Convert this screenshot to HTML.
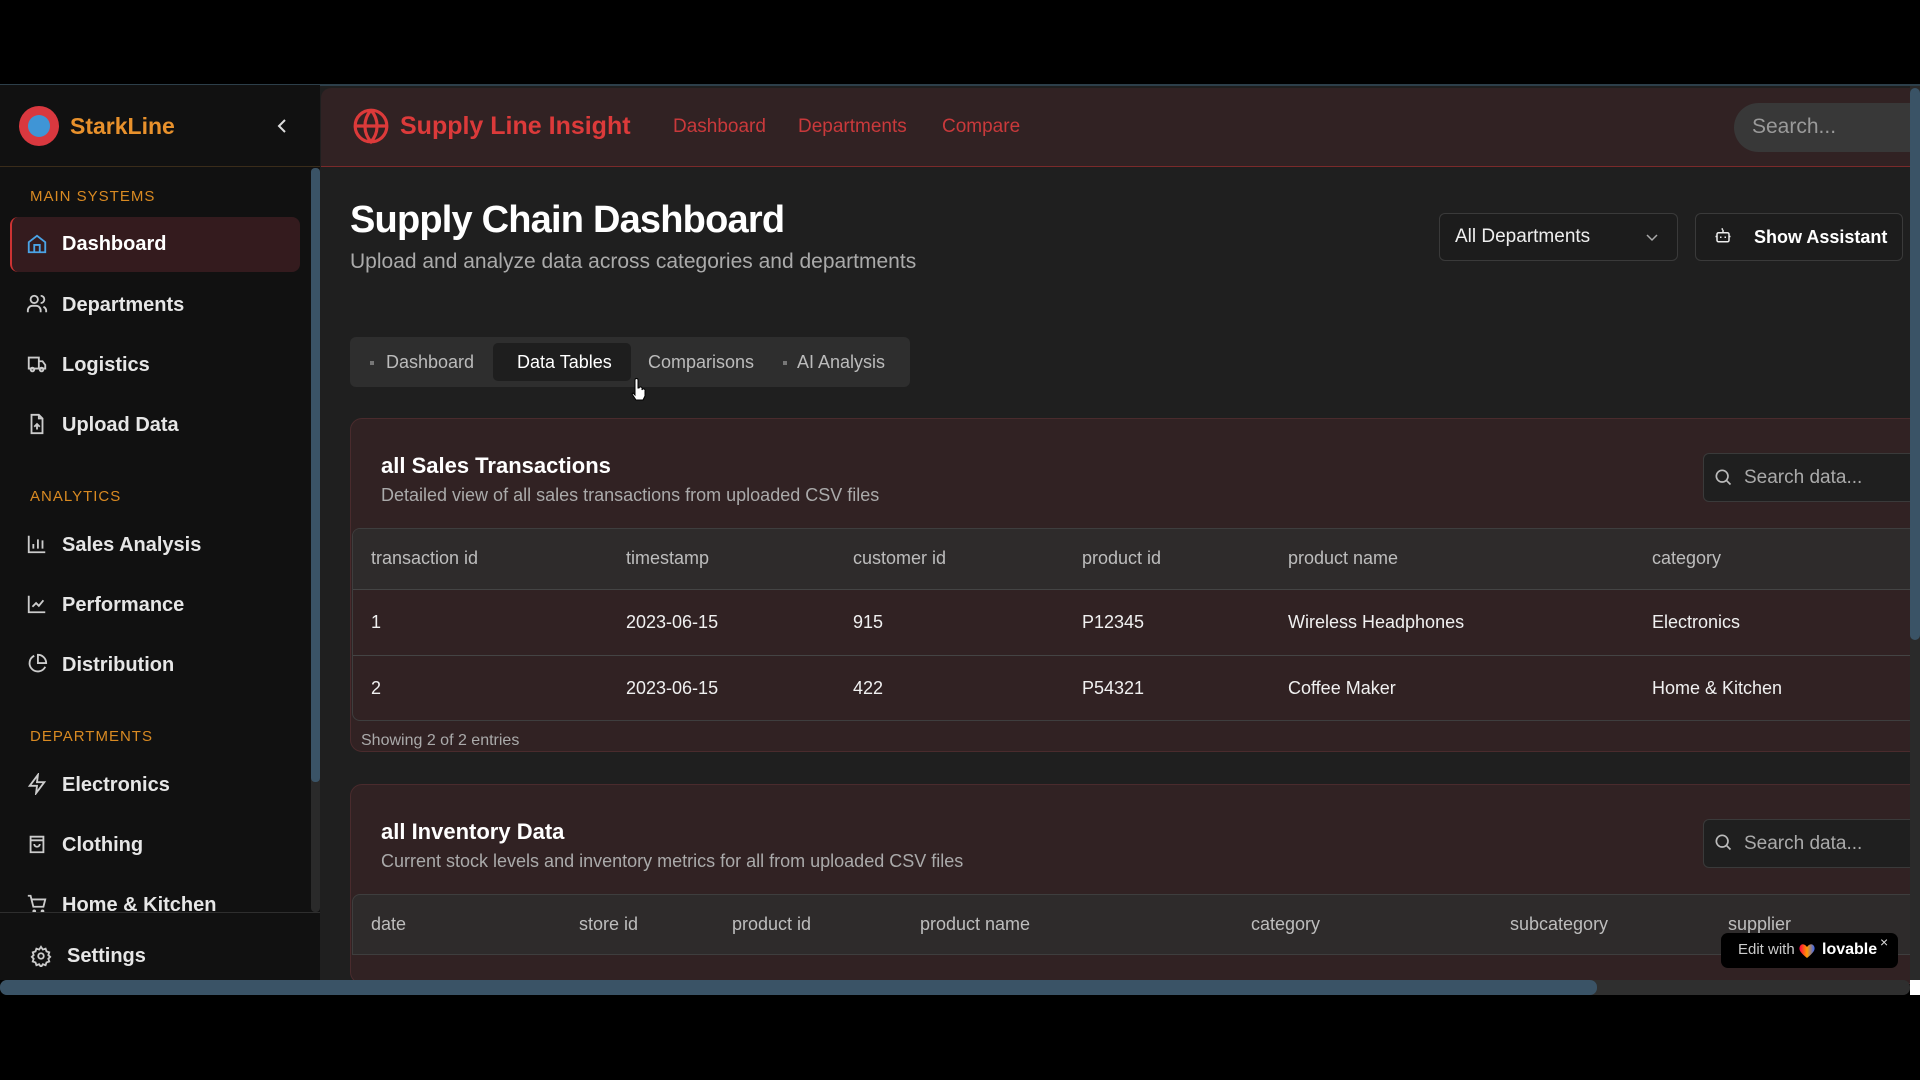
<!DOCTYPE html>
<html><head><meta charset="utf-8"><style>
*{box-sizing:border-box;margin:0;padding:0}
body{width:1920px;height:1080px;background:#000;font-family:"Liberation Sans",sans-serif;position:relative;overflow:hidden;color:#eee}
.a{position:absolute;white-space:nowrap}
.side{left:0;top:85px;width:320px;height:895px;background:#111}
.sec{font-size:15px;color:#d98a22;letter-spacing:1px;left:30px}
.it{left:62px;font-size:20px;color:#e6e6e6;font-weight:bold;line-height:24px}
.ic{left:26px;width:22px;height:22px}
.th{font-size:18px;color:#bdbdbd}
.td{font-size:18px;color:#f0f0f0}
</style></head><body>
<div class="a" style="left:0;top:84px;width:1920px;height:2px;background:#2d3f4a"></div>
<div class="a side"></div>
<div class="a" style="left:0;top:166px;width:320px;height:1px;background:#3a2c1a"></div>
<div class="a" style="left:19px;top:106px;width:40px;height:40px;border-radius:50%;background:#d9383f"></div>
<div class="a" style="left:28px;top:115px;width:22px;height:22px;border-radius:50%;background:#3f95d6"></div>
<div class="a" style="left:70px;top:113px;font-size:23px;font-weight:bold;color:#e8912c">StarkLine</div>
<svg class="a" style="left:274px;top:117px" width="16" height="18" viewBox="0 0 16 18"><path d="M11 3 L5 9 L11 15" stroke="#ddd" stroke-width="2" fill="none"/></svg>
<div class="a" style="left:311px;top:168px;width:9px;height:744px;background:#2a2a2a;border-radius:4px"></div>
<div class="a" style="left:311px;top:168px;width:9px;height:614px;background:#3a5366;border-radius:4px"></div>
<div class="a sec" style="top:188px">MAIN SYSTEMS</div>
<div class="a" style="left:10px;top:217px;width:290px;height:55px;background:#341b1e;border-radius:8px;border-left:2px solid #c33"></div>
<svg class="a ic" style="top:233px" viewBox="0 0 24 24" fill="none" stroke="#4aa3e6" stroke-width="2"><path d="M3 10 L12 3 L21 10 V21 H3 Z M9 21 V13 H15 V21"/></svg>
<div class="a it" style="top:232px;color:#fff">Dashboard</div>
<svg class="a ic" style="top:293px" viewBox="0 0 24 24" fill="none" stroke="#ccc" stroke-width="2"><circle cx="9" cy="7" r="4"/><path d="M2 21v-2a5 5 0 0 1 5-5h4a5 5 0 0 1 5 5v2M16 3a4 4 0 0 1 0 8M22 21v-2a5 5 0 0 0-3-4"/></svg>
<div class="a it" style="top:293px">Departments</div>
<svg class="a ic" style="top:353px" viewBox="0 0 24 24" fill="none" stroke="#ccc" stroke-width="2"><path d="M3 5h11v12H3zM14 9h4l3 4v4h-7"/><circle cx="7" cy="18" r="2"/><circle cx="17" cy="18" r="2"/></svg>
<div class="a it" style="top:353px">Logistics</div>
<svg class="a ic" style="top:413px" viewBox="0 0 24 24" fill="none" stroke="#ccc" stroke-width="2"><path d="M14 2H6v20h12V6zM14 2v4h4M12 18v-6M9 15l3-3 3 3"/></svg>
<div class="a it" style="top:413px">Upload Data</div>
<div class="a sec" style="top:488px">ANALYTICS</div>
<svg class="a ic" style="top:533px" viewBox="0 0 24 24" fill="none" stroke="#ccc" stroke-width="2"><path d="M3 3v18h18M8 17v-5M13 17V7M18 17v-9"/></svg>
<div class="a it" style="top:533px">Sales Analysis</div>
<svg class="a ic" style="top:593px" viewBox="0 0 24 24" fill="none" stroke="#ccc" stroke-width="2"><path d="M3 3v18h18M7 15l4-4 3 3 5-6"/></svg>
<div class="a it" style="top:593px">Performance</div>
<svg class="a ic" style="top:653px" viewBox="0 0 24 24" fill="none" stroke="#ccc" stroke-width="2"><path d="M21 15A9 9 0 1 1 9 3M13 2a9 9 0 0 1 9 9h-9z"/></svg>
<div class="a it" style="top:653px">Distribution</div>
<div class="a sec" style="top:728px">DEPARTMENTS</div>
<svg class="a ic" style="top:773px" viewBox="0 0 24 24" fill="none" stroke="#ccc" stroke-width="2"><path d="M13 2 L4 14 H12 L11 22 L20 10 H12 Z"/></svg>
<div class="a it" style="top:773px">Electronics</div>
<svg class="a ic" style="top:833px" viewBox="0 0 24 24" fill="none" stroke="#ccc" stroke-width="2"><path d="M5 4h14v17H5zM5 8h14M9 12a3 3 0 0 0 6 0"/></svg>
<div class="a it" style="top:833px">Clothing</div>
<div class="a" style="left:0;top:880px;width:311px;height:32px;overflow:hidden">
<svg class="a ic" style="top:13px" viewBox="0 0 24 24" fill="none" stroke="#ccc" stroke-width="2"><path d="M2 3h3l3 12h11l2-8H6"/><circle cx="9" cy="20" r="1"/><circle cx="18" cy="20" r="1"/></svg>
<div class="a it" style="top:13px">Home &amp; Kitchen</div></div>
<div class="a" style="left:0;top:912px;width:320px;height:1px;background:#2e2e2e"></div>
<svg class="a" style="left:30px;top:945px" width="22" height="22" viewBox="0 0 24 24" fill="none" stroke="#ccc" stroke-width="2"><circle cx="12" cy="12" r="3"/><path d="M12 2l2 3 3-1 1 3 3 1-1 3 2 2-2 2 1 3-3 1-1 3-3-1-2 3-2-3-3 1-1-3-3-1 1-3-2-2 2-2-1-3 3-1 1-3 3 1z"/></svg>
<div class="a it" style="left:67px;top:944px">Settings</div>

<div class="a" style="left:320px;top:86px;width:1600px;height:894px;background:#1f1f1f"></div>
<div class="a" style="left:321px;top:88px;width:1599px;height:79px;background:#312223;border-bottom:1px solid #7a2a2a;border-radius:10px 0 0 0"></div>
<svg class="a" style="left:352px;top:107px" width="38" height="38" viewBox="0 0 24 24" fill="none" stroke="#dc3a3a" stroke-width="2"><circle cx="12" cy="12" r="10"/><path d="M2 12h20M12 2a15 15 0 0 1 0 20a15 15 0 0 1 0-20"/></svg>
<div class="a" style="left:400px;top:112px;font-size:25px;font-weight:bold;color:#dc3a3a">Supply Line Insight</div>
<div class="a" style="left:673px;top:116px;font-size:19px;color:#c9393b">Dashboard</div>
<div class="a" style="left:798px;top:116px;font-size:19px;color:#c9393b">Departments</div>
<div class="a" style="left:942px;top:116px;font-size:19px;color:#c9393b">Compare</div>
<div class="a" style="left:1734px;top:103px;width:200px;height:49px;background:#383838;border-radius:25px"></div>
<div class="a" style="left:1752px;top:115px;font-size:21px;color:#9a9a9a">Search...</div>

<div class="a" style="left:350px;top:199px;font-size:38px;font-weight:bold;color:#fff;letter-spacing:-0.8px">Supply Chain Dashboard</div>
<div class="a" style="left:350px;top:250px;font-size:21px;color:#aaa">Upload and analyze data across categories and departments</div>
<div class="a" style="left:1439px;top:213px;width:239px;height:48px;border:1px solid #3a3a3a;border-radius:6px;background:#1c1c1c"></div>
<div class="a" style="left:1455px;top:226px;font-size:19px;color:#eee">All Departments</div>
<svg class="a" style="left:1645px;top:230px" width="14" height="14" viewBox="0 0 14 14"><path d="M2 5l5 5 5-5" stroke="#aaa" stroke-width="1.5" fill="none"/></svg>
<div class="a" style="left:1695px;top:213px;width:208px;height:48px;border:1px solid #3a3a3a;border-radius:6px;background:#1c1c1c"></div>
<svg class="a" style="left:1714px;top:226px" width="18" height="18" viewBox="0 0 24 24" fill="none" stroke="#eee" stroke-width="2"><rect x="4" y="9" width="16" height="12" rx="2"/><path d="M12 9V5M10 4h2M9 14v2M15 14v2M2 14h2M20 14h2"/></svg>
<div class="a" style="left:1754px;top:227px;font-size:18px;font-weight:bold;color:#fff">Show Assistant</div>

<div class="a" style="left:350px;top:337px;width:560px;height:50px;background:#2e2e2e;border-radius:6px"></div>
<div class="a" style="left:493px;top:343px;width:138px;height:38px;background:#1e1e1e;border-radius:5px"></div>
<div class="a" style="left:370px;top:361px;width:4px;height:4px;background:#777"></div>
<div class="a" style="left:386px;top:352px;font-size:18px;color:#bbb">Dashboard</div>
<div class="a" style="left:517px;top:352px;font-size:18px;color:#fff">Data Tables</div>
<div class="a" style="left:648px;top:352px;font-size:18px;color:#bbb">Comparisons</div>
<div class="a" style="left:783px;top:361px;width:4px;height:4px;background:#777"></div>
<div class="a" style="left:797px;top:352px;font-size:18px;color:#bbb">AI Analysis</div>
<svg class="a" style="left:630px;top:378px" width="16" height="24" viewBox="0 0 16 24"><path d="M5 2a1.5 1.5 0 0 1 3 0v8h1a1.5 1.5 0 0 1 3 1v1a1.5 1.5 0 0 1 3 1v5l-2 4H6l-4-6 1-1 2 2z" fill="#fff" stroke="#000" stroke-width="1"/></svg>

<div class="a" style="left:350px;top:418px;width:1600px;height:334px;background:#312223;border:1px solid #4a2b2d;border-radius:12px"></div>
<div class="a" style="left:381px;top:453px;font-size:22px;font-weight:bold;color:#fff">all Sales Transactions</div>
<div class="a" style="left:381px;top:485px;font-size:18px;color:#aaa">Detailed view of all sales transactions from uploaded CSV files</div>
<div class="a" style="left:1703px;top:453px;width:260px;height:49px;background:#1f1f1f;border:1px solid #3a3a3a;border-radius:6px"></div>
<svg class="a" style="left:1713px;top:467px" width="20" height="20" viewBox="0 0 24 24" fill="none" stroke="#bbb" stroke-width="2"><circle cx="11" cy="11" r="7"/><path d="M16 16l5 5"/></svg>
<div class="a" style="left:1744px;top:467px;font-size:19px;color:#aaa">Search data...</div>
<div class="a" style="left:352px;top:528px;width:1600px;height:193px;border:1px solid #3e3e3e;border-radius:8px;overflow:hidden">
<div style="height:61px;background:#2e2b2b;border-bottom:1px solid #444"></div>
<div style="height:66px;border-bottom:1px solid #444"></div></div>
<div class="a th" style="left:371px;top:548px">transaction id</div><div class="a th" style="left:626px;top:548px">timestamp</div><div class="a th" style="left:853px;top:548px">customer id</div><div class="a th" style="left:1082px;top:548px">product id</div><div class="a th" style="left:1288px;top:548px">product name</div><div class="a th" style="left:1652px;top:548px">category</div>
<div class="a td" style="left:371px;top:612px">1</div><div class="a td" style="left:626px;top:612px">2023-06-15</div><div class="a td" style="left:853px;top:612px">915</div><div class="a td" style="left:1082px;top:612px">P12345</div><div class="a td" style="left:1288px;top:612px">Wireless Headphones</div><div class="a td" style="left:1652px;top:612px">Electronics</div>
<div class="a td" style="left:371px;top:678px">2</div><div class="a td" style="left:626px;top:678px">2023-06-15</div><div class="a td" style="left:853px;top:678px">422</div><div class="a td" style="left:1082px;top:678px">P54321</div><div class="a td" style="left:1288px;top:678px">Coffee Maker</div><div class="a td" style="left:1652px;top:678px">Home &amp; Kitchen</div>
<div class="a" style="left:361px;top:732px;font-size:16px;color:#aaa">Showing 2 of 2 entries</div>

<div class="a" style="left:350px;top:784px;width:1600px;height:200px;background:#312223;border:1px solid #4a2b2d;border-radius:12px"></div>
<div class="a" style="left:381px;top:819px;font-size:22px;font-weight:bold;color:#fff">all Inventory Data</div>
<div class="a" style="left:381px;top:851px;font-size:18px;color:#aaa">Current stock levels and inventory metrics for all from uploaded CSV files</div>
<div class="a" style="left:1703px;top:819px;width:260px;height:49px;background:#1f1f1f;border:1px solid #3a3a3a;border-radius:6px"></div>
<svg class="a" style="left:1713px;top:832px" width="20" height="20" viewBox="0 0 24 24" fill="none" stroke="#bbb" stroke-width="2"><circle cx="11" cy="11" r="7"/><path d="M16 16l5 5"/></svg>
<div class="a" style="left:1744px;top:833px;font-size:19px;color:#aaa">Search data...</div>
<div class="a" style="left:352px;top:894px;width:1600px;height:61px;background:#2e2b2b;border:1px solid #3e3e3e;border-radius:8px 8px 0 0"></div>
<div class="a th" style="left:371px;top:914px">date</div><div class="a th" style="left:579px;top:914px">store id</div><div class="a th" style="left:732px;top:914px">product id</div><div class="a th" style="left:920px;top:914px">product name</div><div class="a th" style="left:1251px;top:914px">category</div><div class="a th" style="left:1510px;top:914px">subcategory</div><div class="a th" style="left:1728px;top:914px">supplier</div>

<div class="a" style="left:1910px;top:86px;width:10px;height:894px;background:#2a2a2a"></div>
<div class="a" style="left:1910px;top:88px;width:10px;height:552px;background:#3a5366;border-radius:5px"></div>
<div class="a" style="left:1721px;top:933px;width:177px;height:35px;background:#000;border-radius:7px"></div>
<div class="a" style="left:1738px;top:941px;font-size:15px;color:#ccc">Edit with</div>
<svg class="a" style="left:1798px;top:943px" width="18" height="16" viewBox="0 0 18 16"><defs><linearGradient id="g" x1="0" x2="1"><stop offset="0" stop-color="#f04"/><stop offset=".5" stop-color="#f90"/><stop offset="1" stop-color="#36f"/></linearGradient></defs><path d="M9 15C3 10 0 7 2 3c2-3 5-2 7 1 2-3 5-4 7-1 2 4-1 7-7 12z" fill="url(#g)"/></svg>
<div class="a" style="left:1822px;top:941px;font-size:16px;font-weight:bold;color:#fff">lovable</div>
<div class="a" style="left:1880px;top:934px;font-size:14px;color:#ddd">×</div>
<div class="a" style="left:0;top:980px;width:1910px;height:15px;background:#2f2f2f;border-radius:7px"></div>
<div class="a" style="left:0;top:980px;width:1597px;height:15px;background:#3a5366;border-radius:7px"></div>
<div class="a" style="left:1910px;top:980px;width:10px;height:15px;background:#fff"></div>
<div class="a" style="left:0;top:995px;width:1920px;height:85px;background:#000"></div>
</body></html>
